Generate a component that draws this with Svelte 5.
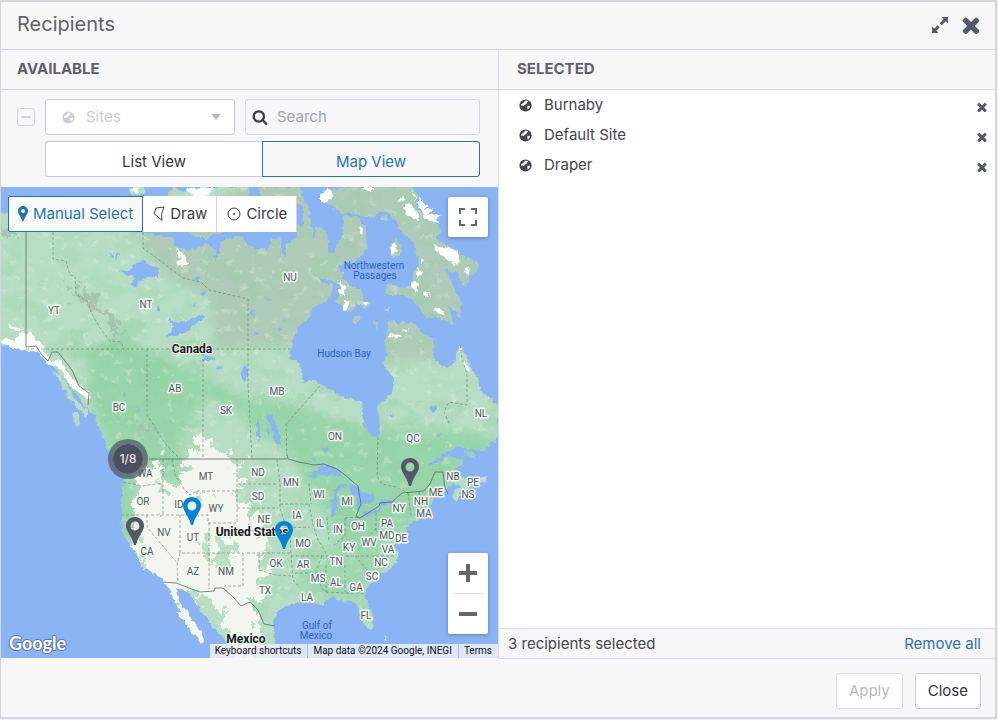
<script>
	let view = $state('map')
	let mode = $state('manual')
	let query = $state('')
	let sites = $state(['Burnaby', 'Default Site', 'Draper'])

	const MAP_WIDTH = 497
	const MAP_HEIGHT = 471

	const pins = [
		{ name: 'Sacramento', x: 134, y: 359, picked: false },
		{ name: 'Draper', x: 191, y: 339, picked: true },
		{ name: 'Default Site', x: 283, y: 363, picked: true },
		{ name: 'Ottawa', x: 409, y: 300, picked: false }
	]

	const regions = [
		['YT', 54, 314], ['NT', 146, 308], ['NU', 290, 281], ['AB', 175, 392], ['SK', 226, 414],
		['MB', 277, 395], ['BC', 119, 411], ['ON', 335, 440], ['QC', 413, 442], ['NL', 481, 417],
		['WA', 145, 477], ['MT', 206, 480], ['ND', 258, 476], ['MN', 291, 486], ['OR', 143, 505],
		['ID', 179, 508], ['WY', 216, 512], ['SD', 258, 500], ['NE', 264, 523], ['WI', 319, 498],
		['MI', 347, 505], ['IA', 297, 519], ['IL', 320, 527], ['IN', 338, 533], ['OH', 358, 530],
		['NV', 164, 536], ['UT', 193, 541], ['CA', 147, 555], ['AZ', 193, 575], ['NM', 226, 575],
		['OK', 276, 567], ['MO', 303, 547], ['KY', 349, 551], ['WV', 369, 546], ['VA', 388, 553],
		['PA', 387, 527], ['MD', 387, 539], ['DE', 401, 542], ['NY', 399, 512], ['NH', 421, 505],
		['MA', 424, 517], ['ME', 436, 496], ['NB', 453, 480], ['PE', 473, 486], ['NS', 468, 498],
		['AR', 303, 568], ['TN', 336, 565], ['NC', 381, 566], ['SC', 372, 580], ['MS', 318, 582],
		['AL', 336, 586], ['GA', 356, 591], ['LA', 307, 601], ['TX', 265, 594], ['FL', 366, 619]
	]

	const land =
		'M0 213 L30 216 L62 222 L100 226 L150 234 L174 238 L174 247 L190 250 L205 244 L214 247 L215 262 L219 253 L221 241 L240 236 L250 247 L268 250 L272 240 L281 237 L282 252 L286 258 L286 245 L297 238 L296 225 L303 225 L303 207 L298 202 L291 187 L300 187 L303 198 L309 211 L310 222 L315 241 L316 228 L321 226 L327 235 L328 252 L334 255 L337 246 L344 233 L343 217 L349 216 L359 218 L365 226 L367 245 L364 254 L353 262 L341 264 L337 268 L344 273 L340 283 L329 280 L317 277 L324 283 L333 285 L330 298 L317 305 L313 308 L311 314 L303 322 L298 329 L292 340 L290 358 L300 364 L303 382 L312 380 L323 385 L334 392 L347 398 L361 402 L363 423 L372 437 L379 436 L380 425 L377 407 L390 395 L393 385 L393 378 L383 365 L388 352 L385 340 L388 328 L387 321 L394 320 L399 325 L404 322 L417 325 L422 333 L433 340 L433 358 L445 368 L453 365 L460 345 L465 354 L470 365 L479 380 L478 387 L489 398 L498 405 L498 439 L490 444 L484 451 L458 447 L446 452 L430 463 L426 469 L434 464 L450 456 L462 460 L463 464 L454 469 L459 476 L472 480 L485 476 L487 482 L475 484 L462 491 L455 500 L452 499 L455 489 L463 487 L453 483 L446 491 L434 498 L427 508 L429 514 L434 515 L423 518 L410 523 L405 535 L399 546 L397 538 L393 536 L395 546 L398 552 L397 562 L389 569 L380 574 L371 584 L365 592 L366 600 L372 613 L373 627 L368 630 L361 619 L358 605 L350 600 L342 602 L336 598 L325 599 L322 605 L312 603 L303 602 L293 603 L278 611 L273 620 L275 644 L274 658 L231 658 L227 642 L213 627 L200 610 L190 594 L182 589 L176 589 L178 600 L188 613 L198 627 L204 641 L203 645 L199 640 L188 626 L176 612 L181 611 L173 598 L167 585 L160 577 L150 570 L143 569 L137 558 L132 546 L127 542 L122 528 L121 510 L123 482 L125 470 L117 458 L106 442 L98 426 L96 415 L89 412 L81 400 L72 389 L64 378 L55 369 L48 363 L38 352 L24 349 L12 348 L0 344 Z'

	const islands = [
		'M320 198 L325 192 L333 190 L343 187 L410 187 L417 194 L415 208 L427 214 L435 222 L441 230 L435 240 L446 244 L454 248 L465 259 L469 257 L479 265 L474 274 L468 276 L467 287 L461 284 L459 274 L452 272 L444 268 L450 278 L455 290 L461 302 L460 318 L456 312 L448 304 L451 315 L453 324 L445 320 L435 316 L426 318 L420 308 L411 298 L400 295 L387 295 L385 288 L391 284 L402 288 L413 285 L413 273 L419 266 L417 252 L412 240 L401 232 L397 222 L391 215 L383 210 L375 217 L367 216 L353 213 L340 213 L333 207 Z',
		'M340 279 L346 281 L350 286 L361 290 L363 300 L370 304 L365 308 L356 303 L352 310 L347 312 L343 305 L336 303 L339 294 Z',
		'M174 187 L180 191 L190 190 L200 188 L213 187 L248 187 L250 193 L239 200 L248 212 L240 222 L228 232 L214 234 L207 240 L188 233 L170 228 L160 212 L165 199 Z',
		'M128 187 L145 187 L144 193 L131 196 Z',
		'M258 187 L296 187 L300 196 L296 205 L280 208 L264 200 Z',
		'M390 245 L396 239 L402 246 L401 255 L393 257 Z',
		'M352 319 L358 315 L361 318 L355 324 Z',
		'M104 437 L111 442 L118 453 L125 462 L118 461 L107 448 Z',
		'M72 413 L78 413 L80 424 L76 427 Z',
		'M53 372 L60 374 L69 387 L76 400 L88 411 L88 420 L80 410 L70 400 L62 385 Z',
		'M465 451 L474 454 L477 457 L469 456 Z',
		'M496 443 L490 440 L498 435 Z',
		'M383 214 L388 218 L385 221 L379 218 Z',
		'M385 309 L389 307 L388 313 Z M374 321 L378 323 L376 329 Z'
	]

	const glaciers = [
		'M404 206 L410 203 L419 216 L419 220 L411 217 L405 214 Z',
		'M434 244 L440 247 L449 247 L456 251 L460 262 L454 265 L446 258 L437 251 Z',
		'M411 189 L417 198 L414 201 L421 203 L418 196 L427 207 L423 210 L434 208 L428 214 L440 215 L434 219 L440 224 L433 223 L425 219 Z',
		'M391 244 L396 242 L397 251 L392 254 Z',
		'M340 280 L345 287 L345 296 L339 293 Z M344 300 L349 302 L349 308 L344 311 Z M363 301 L369 303 L365 306 Z',
		'M413 281 L420 285 L417 292 L411 287 Z M423 292 L430 293 L428 297 L423 295 Z M432 309 L439 307 L446 317 L440 314 Z',
		'M417 268 L422 272 L419 278 L416 275 Z M421 258 L424 262 L421 265 Z',
		'M320 194 L329 189 L333 195 L326 203 L320 200 Z M362 187 L374 187 L370 193 Z M397 201 L403 196 L405 200 L399 203 Z',
		'M359 226 L363 227 L362 235 Z M464 270 L470 268 L467 276 Z M389 334 L402 335 L398 338 L389 337 Z M402 330 L411 328 L405 331 Z',
		'M176 249 L182 252 L188 263 L182 267 L175 262 L181 260 Z M185 188 L214 187 L208 196 L196 199 Z M130 189 L140 187 L137 193 Z',
		'M0 342 L6 338 L14 341 L19 334 L30 333 L37 340 L42 344 L45 353 L52 362 L60 360 L67 372 L75 381 L84 390 L91 393 L88 400 L77 391 L71 386 L62 371 L57 365 L51 367 L45 360 L38 352 L24 350 L10 347 Z M8 324 L18 327 L23 331 L12 330 Z',
		'M463 360 L470 368 L468 372 L464 368 Z M459 345 L462 350 L460 353 Z M384 636 L387 641 L385 640 Z'
	]

	const lakes = [
		'M118 272 L129 271 L134 264 L145 260 L150 267 L159 268 L158 277 L147 278 L141 280 L135 288 L130 286 L134 277 L128 275 Z',
		'M165 335 L170 333 L172 325 L168 318 L177 323 L184 322 L191 319 L199 315 L207 316 L198 321 L190 330 L181 333 L174 337 Z',
		'M197 362 L203 359 L206 355 L214 357 L216 360 L205 361 Z M155 306 L161 310 L160 312 L156 310 Z',
		'M266 414 L272 415 L276 424 L279 434 L281 445 L275 442 L272 430 Z M257 420 L260 425 L260 441 L257 438 Z M267 424 L270 432 L268 436 Z',
		'M308 476 L315 471 L324 465 L332 467 L338 469 L344 477 L336 477 L332 474 L325 476 L318 474 L314 479 Z',
		'M333 490 L340 485 L349 483 L343 487 L338 490 L337 505 L335 515 L331 517 L330 506 L334 497 Z',
		'M349 484 L357 487 L364 493 L374 495 L375 501 L367 505 L362 502 L360 508 L357 511 L356 497 L351 491 Z',
		'M357 517 L364 513 L373 511 L381 506 L380 512 L372 514 L361 518 Z M378 504 L381 500 L394 499 L393 503 L380 506 Z',
		'M241 370 L246 365 L248 373 L245 384 L243 379 Z M194 278 L200 277 L198 281 L195 280 Z M200 293 L205 291 L204 296 Z M193 304 L197 303 L195 306 Z M216 368 L222 366 L219 370 Z',
		'M250 308 L255 310 L254 318 L250 315 Z M265 298 L271 300 L268 301 Z M277 327 L282 328 L279 331 Z M282 319 L287 320 L284 322 Z M254 331 L259 332 L256 334 Z',
		'M429 408 L432 405 L437 407 L435 413 L431 411 Z M388 415 L394 413 L391 417 Z M437 435 L441 433 L440 439 Z M323 449 L328 447 L327 453 Z M312 458 L316 459 L313 461 Z M367 430 L370 428 L369 431 Z',
		'M109 252 L114 256 L112 259 Z M117 252 L120 254 L115 261 Z M123 391 L126 394 L124 397 Z M137 406 L140 410 L138 412 Z M377 389 L380 388 L379 392 Z M159 513 L163 516 L161 517 Z'
	]

	const borders = [
		'M26 232 L26 347', 'M149 459 L287 459', 'M287 455 L288 459 L299 462 L314 465 L324 464 L337 469 L344 474 L358 486 L361 504 L356 516 L360 518 L379 506 L380 503 L392 502 L402 493 L424 491 L430 484 L435 472 L443 472 L445 488 L448 494',
		'M163 582 L176 583 L200 592 L214 591 L215 588 L223 588 L233 597 L241 606 L250 602 L258 610 L264 624 L275 626',
		'M26 347 L36 346 L42 355 L48 361 L52 352 L58 352 L72 370 L79 386 L89 393 L88 405'
	]

	const dashes = [
		'M26 349 L248 349', 'M53 232 V259 L66 261 L70 275 L75 276 L76 294 L88 302 L91 312 L100 328 L110 341 L121 342 L124 349',
		'M143 232 V248 L166 265 L183 278 L201 282 L209 290 L248 299 V385', 'M248 349 L290 349', 'M147 349 V415 L157 430 L166 445 L180 459',
		'M203 349 V459', 'M248 385 L252 459', 'M320 386 L286 424 L287 457', 'M378 437 L377 476 L382 484 L396 487 L408 493', 'M460 345 L462 358 L467 375 L467 405 L455 403 L449 402 L444 412 L450 425',
		'M163 459 V491', 'M172 459 L175 475 L185 490 L190 495 L197 491', 'M123 482 L142 486 L163 483', 'M121 515 H180', 'M147 515 V527 L177 563', 'M163 491 V515',
		'M180 515 V553 H243', 'M180 553 L177 565 L178 582', 'M197 491 H237', 'M237 459 V523 H208 V515 H180', 'M209 523 V589', 'M243 553 V586 H224', 'M197 491 V513', 'M237 508 L278 508', 'M238 484 L278 484', 'M277 459 L280 484 L280 508 L287 530',
		'M249 523 V531 H287', 'M247 553 L290 553', 'M259 555 V570 L275 575 L292 576', 'M290 530 L291 555 L293 580 L300 588', 'M280 504 L309 504', 'M283 528 L310 527', 'M309 504 L313 525 L318 540 L326 553', 'M291 556 L394 556', 'M322 556 L315 573 L324 592', 'M326 565 V592', 'M345 565 V592', 'M326 592 L345 593 L365 593', 'M309 483 L311 504', 'M327 517 L329 542', 'M345 518 V536 L334 545', 'M345 518 L360 517', 'M376 513 V532 H399', 'M376 528 L366 540 L358 550', 'M355 556 L370 573', 'M318 573 L295 573', 'M408 493 L411 515 L425 514', 'M419 492 L422 509'
	]
</script>

{#snippet globe()}
	<svg class="globe" viewBox="0 0 16 16" aria-hidden="true">
		<circle cx="8" cy="8" r="7.5" fill="currentColor" />
		<path
			d="M8 2 10.2 2 11.2 3.400 9.800 4.400 9 6 7 7.200 5.800 8.800 4.600 8 3.200 8.600 2.400 7 3.800 5.600 5.600 5.200 6.200 3.400Z M10.400 8.400 12.600 8.200 13.600 9.600 12.400 11.600 10.800 12.800 10.200 11Z"
			fill="var(--globe-land, #fff)"
		/>
	</svg>
{/snippet}

{#snippet times()}
	<svg viewBox="256 256 1280 1280" fill="currentColor" aria-hidden="true">
		<path d="M1490 1322q0 40-28 68l-136 136q-28 28-68 28t-68-28l-294-294-294 294q-28 28-68 28t-68-28l-136-136q-28-28-28-68t28-68l294-294-294-294q-28-28-28-68t28-68l136-136q28-28 68-28t68 28l294 294 294-294q28-28 68-28t68 28l136 136q28 28 28 68t-28 68l-294 294 294 294q28 28 28 68z" />
	</svg>
{/snippet}

<main class="dialog">
	<header class="title-bar">
		<h1>Recipients</h1>
		<button class="icon-button expand" aria-label="Expand">
			<svg viewBox="0 0 18 18" fill="currentColor" aria-hidden="true">
				<path d="M10.500 1H17v6.500l-2.200-2.200-4 4-2.100-2.100 4-4Z M1 10.500l2.200 2.200 3.500-3.500 2.100 2.100-3.500 3.500L7.500 17H1Z" />
			</svg>
		</button>
		<button class="icon-button close" aria-label="Close dialog">{@render times()}</button>
	</header>

	<div class="panels">
		<section class="panel">
			<h2>Available</h2>
			<div class="filters">
				<input type="checkbox" class="check-all" aria-label="Select all" indeterminate disabled />
				<div class="select-box">
					{@render globe()}
					<select aria-label="Recipient type" disabled>
						<option>Sites</option>
					</select>
					<svg class="caret" viewBox="0 0 10 6" aria-hidden="true"><path d="M0 0H10L5 6Z" fill="currentColor" /></svg>
				</div>
				<div class="search-box">
					<svg viewBox="0 0 1792 1792" fill="currentColor" aria-hidden="true">
						<path d="M1216 832q0-185-131.500-316.500t-316.500-131.500-316.500 131.500-131.500 316.500 131.500 316.500 316.500 131.500 316.500-131.500 131.500-316.500zm512 832q0 52-38 90t-90 38q-54 0-90-38l-343-342q-179 124-399 124-143 0-273.500-55.500t-225-150-150-225-55.500-273.500 55.500-273.500 150-225 225-150 273.500-55.500 273.500 55.500 225 150 150 225 55.500 273.500q0 220-124 399l343 343q37 37 37 90z" />
					</svg>
					<input type="text" placeholder="Search" aria-label="Search" bind:value={query} />
				</div>
				<div class="view-toggle">
					<button class:active={view === 'list'} onclick={() => (view = 'list')}>List View</button>
					<button class:active={view === 'map'} onclick={() => (view = 'map')}>Map View</button>
				</div>
			</div>

			<div class="map">
				<svg class="terrain" viewBox="1 187 497 471" preserveAspectRatio="none" role="img" aria-label="Map of North America">
					<defs>
						<clipPath id="land">
							<path d={land} />
							{#each islands as d}<path {d} />{/each}
						</clipPath>
						<filter id="soft" x="-20%" y="-20%" width="140%" height="140%"><feGaussianBlur stdDeviation="5" /></filter>
						<filter id="ragged" x="-20%" y="-20%" width="140%" height="140%" color-interpolation-filters="sRGB">
							<feTurbulence type="fractalNoise" baseFrequency="0.09" numOctaves="5" seed="4" />
							<feDisplacementMap in="SourceGraphic" scale="36" xChannelSelector="R" yChannelSelector="G" />
						</filter>
						<filter id="forest" x="0" y="0" width="100%" height="100%">
							<feTurbulence type="fractalNoise" baseFrequency="0.035 0.05" numOctaves="5" seed="11" />
							<feColorMatrix values="0 0 0 0 0.29  0 0 0 0 0.63  0 0 0 0 0.36  5 0 0 0 -2.4" />
						</filter>
						<filter id="dust" x="0" y="0" width="100%" height="100%">
							<feTurbulence type="fractalNoise" baseFrequency="0.12" numOctaves="4" seed="3" />
							<feColorMatrix values="0 0 0 0 0.8  0 0 0 0 0.9  0 0 0 0 0.78  0 7 0 0 -4.3" />
						</filter>
						<filter id="coast" color-interpolation-filters="sRGB">
							<feTurbulence type="fractalNoise" baseFrequency="0.2" numOctaves="2" seed="8" />
							<feDisplacementMap in="SourceGraphic" scale="6" xChannelSelector="R" yChannelSelector="G" />
						</filter>
					</defs>
					<rect x="1" y="187" width="497" height="471" fill="#8bb4f5" />
					<g filter="url(#coast)">
						<g clip-path="url(#land)">
							<rect x="0" y="186" width="500" height="474" fill="#b7dec4" />
							<g filter="url(#soft)">
								<path d="M130 225 L300 170 H510 V300 L445 360 L380 360 L300 345 L215 348 L212 300 L165 275 Z" fill="#adcbb6" />
								<path d="M84 350 L120 335 L200 375 L240 395 L290 405 L330 420 L400 430 L480 430 L498 450 L455 480 L410 520 L375 560 L350 575 L318 500 L290 455 L240 415 L205 395 L180 440 L185 490 L160 470 L135 480 L132 540 L115 540 L118 470 L95 420 Z" fill="#98d5aa" />
								<path d="M300 555 L390 535 L375 575 L370 625 L355 600 L310 600 L297 575 Z" fill="#a0d8b0" />
							</g>
							<rect x="0" y="186" width="500" height="240" filter="url(#forest)" opacity="0.2" />
							<rect x="245" y="390" width="255" height="230" filter="url(#forest)" opacity="0.25" />
							<rect x="70" y="320" width="130" height="230" filter="url(#forest)" opacity="0.3" />
							<rect x="0" y="186" width="500" height="474" filter="url(#dust)" opacity="0.3" />
							<g filter="url(#ragged)">
								<path d="M136 486 L143 465 L160 462 L162 484 L176 492 L182 478 L188 462 L196 440 L206 433 L214 448 L228 455 L240 462 L238 490 L244 506 L264 514 L266 540 L260 556 L266 572 L258 590 L252 612 L262 628 L256 660 L236 660 L216 622 L204 598 L185 588 L212 645 L190 650 L160 585 L138 558 L132 540 L136 510 Z" fill="#f3f6ee" />
								<path d="M212 534 L228 532 L232 552 L224 572 L214 562 Z M198 598 L212 598 L226 625 L234 648 L224 646 L208 620 Z M190 500 L204 494 L206 506 L192 509 Z M196 534 L201 542 L196 550 Z" fill="#b9dfc4" />
								<path d="M133 530 L142 548 L150 558 L146 562 L136 548 Z" fill="#b9dfc4" />
							</g>
							<path d="M66 286 L78 287 L92 297 L105 310 L117 321 L122 335 L112 333 L100 318 L90 304 L75 296 Z M0 226 L20 231 L16 236 L0 233 Z M143 421 L155 425 L152 437 Z" fill="#a3bfaa" opacity="0.8" filter="url(#ragged)" />
						</g>
						{#each glaciers as d}<path {d} fill="#fbfdf9" />{/each}
						{#each lakes as d}<path {d} fill="#8bb4f5" />{/each}
					</g>
					{#each dashes as d}<path {d} class="state-line" />{/each}
					{#each borders as d}<path {d} class="country-line" />{/each}
					{#each regions as [name, x, y]}<text class="region" {x} {y}>{name}</text>{/each}
					<text class="country" x="192" y="353">Canada</text>
					<text class="country" x="252" y="536">United States</text>
					<text class="country" x="246" y="643">Mexico</text>
					<text class="sea" x="374" y="269">Northwestern</text>
					<text class="sea" x="375" y="279">Passages</text>
					<text class="sea" x="344" y="357">Hudson Bay</text>
					<text class="sea" x="317" y="629">Gulf of</text>
					<text class="sea" x="316" y="639">Mexico</text>
				</svg>

				{#each pins as pin}
					<button
						class="pin"
						class:picked={pin.picked}
						aria-label={pin.name}
						style:left="{(pin.x / MAP_WIDTH) * 100}%"
						style:top="{(pin.y / MAP_HEIGHT) * 100}%"
					>
						<svg viewBox="0 0 20 30" aria-hidden="true">
							<path fill-rule="evenodd" d="M10 1C4.800 1 1 4.900 1 9.800c0 3.800 2.800 7.200 5.300 12 1.200 2.200 2.100 5 2.700 7.200h2c.6-2.200 1.500-5 2.700-7.200 2.500-4.800 5.300-8.200 5.300-12C19 4.900 15.200 1 10 1Zm0 4.500a4.500 4.500 0 1 0 0 9 4.500 4.500 0 0 0 0-9Z" fill="currentColor" />
						</svg>
					</button>
				{/each}
				<button
					class="cluster"
					style:left="{(127 / MAP_WIDTH) * 100}%"
					style:top="{(272 / MAP_HEIGHT) * 100}%">1/8</button
				>

				<div class="modes">
					<button class:active={mode === 'manual'} onclick={() => (mode = 'manual')}>
						<svg width="10" height="16" viewBox="0 0 10 16" aria-hidden="true">
							<path fill-rule="evenodd" d="M5 0C2.200 0 0 2.200 0 5c0 2.500 2 4.500 5 11 3-6.500 5-8.500 5-11 0-2.800-2.200-5-5-5Zm0 3a2 2 0 1 1 0 4 2 2 0 0 1 0-4Z" fill="currentColor" />
						</svg>
						Manual Select
					</button>
					<button class:active={mode === 'draw'} onclick={() => (mode = 'draw')}>
						<svg width="12" height="16" viewBox="0 0 12 16" aria-hidden="true">
							<path d="M3 2 11 1 8.500 8.500 9 14.500 1 7.500Z" fill="none" stroke="currentColor" stroke-linejoin="round" />
						</svg>
						Draw
					</button>
					<button class:active={mode === 'circle'} onclick={() => (mode = 'circle')}>
						<svg width="14" height="14" viewBox="0 0 14 14" aria-hidden="true">
							<circle cx="7" cy="7" r="6" fill="none" stroke="currentColor" />
							<circle cx="7" cy="7" r="1" fill="currentColor" />
						</svg>
						Circle
					</button>
				</div>
				<button class="fullscreen" aria-label="Toggle fullscreen view">
					<svg width="18" height="18" viewBox="0 0 18 18" fill="currentColor" aria-hidden="true">
						<path d="M0 0v6h2V2h4V0H0Zm16 0h-4v2h4v4h2V0h-2Zm0 16h-4v2h6v-6h-2v4ZM2 12H0v6h6v-2H2v-4Z" />
					</svg>
				</button>
				<div class="zoom">
					<button aria-label="Zoom in">
						<svg width="18" height="18" viewBox="0 0 18 18" aria-hidden="true"><path d="M7 0h4v7h7v4h-7v7H7v-7H0V7h7Z" fill="currentColor" /></svg>
					</button>
					<button aria-label="Zoom out">
						<svg width="18" height="18" viewBox="0 0 18 18" aria-hidden="true"><path d="M0 7h18v4H0Z" fill="currentColor" /></svg>
					</button>
				</div>
				<svg class="google" width="64" height="28" viewBox="0 0 64 28" role="img" aria-label="Google">
					<text x="3" y="20">Google</text>
				</svg>
				<div class="attribution">
					<button>Keyboard shortcuts</button>
					<span>Map data ©2024 Google, INEGI</span>
					<a href="#terms">Terms</a>
				</div>
			</div>
		</section>

		<section class="panel selected">
			<h2>Selected</h2>
			<ul>
				{#each sites as site (site)}
					<li>
						{@render globe()}
						<span>{site}</span>
						<button
							class="icon-button remove"
							aria-label="Remove {site}"
							onclick={() => (sites = sites.filter((s) => s !== site))}>{@render times()}</button
						>
					</li>
				{/each}
			</ul>
			<div class="summary">
				<span>{sites.length} recipients selected</span>
				<button onclick={() => (sites = [])}>Remove all</button>
			</div>
		</section>
	</div>

	<footer>
		<button disabled>Apply</button>
		<button>Close</button>
	</footer>
</main>

<style>
	:global(body) {
		background: #f2f2f8;
	}

	.dialog {
		display: flex;
		flex-direction: column;
		box-sizing: border-box;
		min-height: calc(100vh - 1px);
		margin-right: 1px;
		border: 2px solid #d5d5dc;
		border-left-width: 1px;
		background: #f7f7f7;
		color: #454550;
		font-family: Inter, 'Open Sans', sans-serif;
		font-size: 15px;
		line-height: 20px;
	}

	button,
	input,
	select {
		font: inherit;
		color: inherit;
		box-sizing: border-box;
	}

	button {
		padding: 0;
		border: 0;
		background: none;
		cursor: pointer;
	}

	svg {
		display: block;
		flex-shrink: 0;
	}

	.title-bar {
		display: flex;
		align-items: center;
		height: 47px;
		padding: 0 15px 0 16px;
		border-bottom: 1px solid #d3d6e0;
	}

	h1 {
		flex: 1;
		margin: 0 0 4px;
		color: #60606c;
		font-size: 20px;
		font-weight: 400;
		line-height: 24px;
	}

	.icon-button {
		color: #535968;
	}

	.title-bar .icon-button {
		padding-bottom: 2px;
	}

	.expand svg,
	.close svg {
		width: 18px;
		height: 18px;
	}

	.close {
		margin-left: 13px;
	}

	.panels {
		display: grid;
		grid-template-columns: repeat(2, minmax(0, 1fr));
		flex: 1;
	}

	.panel {
		display: flex;
		flex-direction: column;
		min-width: 0;
	}

	h2 {
		height: 39px;
		margin: 0;
		padding: 0 16px;
		border-bottom: 1px solid #d3d6e0;
		color: #60606c;
		font-size: 15px;
		font-weight: 700;
		line-height: 38px;
		text-transform: uppercase;
	}

	.filters {
		display: grid;
		grid-template-columns: 18px 190px minmax(0, 1fr);
		align-items: center;
		gap: 6px 10px;
		padding: 9px 18px 10px 16px;
	}

	.check-all {
		display: grid;
		place-items: center;
		appearance: none;
		width: 18px;
		height: 18px;
		margin: 0;
		border: 1px solid #d3d3df;
		border-radius: 3px;
	}

	.check-all::before {
		content: '';
		width: 10px;
		height: 2px;
		background: #d3d3df;
	}

	.select-box,
	.search-box {
		display: flex;
		align-items: center;
		position: relative;
		box-sizing: border-box;
		height: 36px;
		border: 1px solid #c9c9dc;
		border-radius: 3px;
		color: #c9cbdb;
	}

	.select-box {
		background: #fff;
	}

	.select-box .globe {
		position: absolute;
		left: 16px;
		pointer-events: none;
	}

	select {
		appearance: none;
		width: 100%;
		height: 34px;
		padding: 0 30px 0 40px;
		border: 0;
		background: none;
		opacity: 1;
	}

	.caret {
		position: absolute;
		right: 13px;
		width: 10px;
		height: 6px;
		color: #b4b9ce;
		pointer-events: none;
	}

	.search-box {
		border-color: #d0d8e4;
	}

	.search-box svg {
		width: 16px;
		height: 16px;
		margin: 0 9px 0 6px;
		color: #3c3c46;
	}

	.search-box input {
		flex: 1;
		min-width: 0;
		height: 34px;
		padding: 0 0 2px;
		border: 0;
		outline: 0;
		background: none;
		color: #454550;
	}

	.search-box input::placeholder {
		color: #a3a3b3;
	}

	.view-toggle {
		display: flex;
		grid-column: 2 / -1;
	}

	.view-toggle button {
		flex: 1;
		height: 36px;
		padding-top: 5px;
		border: 1px solid #c9c9dc;
		background: #fff;
		color: #33333c;
	}

	.view-toggle button:first-child {
		border-right: 0;
		border-radius: 3px 0 0 3px;
	}

	.view-toggle button:last-child {
		border-radius: 0 3px 3px 0;
	}

	.view-toggle .active {
		border: 1px solid #1f76b4;
		background: #f7f7f7;
		color: #1f76b4;
	}

	.map {
		position: relative;
		flex: 1;
		min-height: 300px;
		overflow: hidden;
		font-family: Roboto, sans-serif;
	}

	.terrain {
		position: absolute;
		width: 100%;
		height: 100%;
	}

	.state-line {
		fill: none;
		stroke: #687d70;
		stroke-dasharray: 3 2;
		opacity: 0.6;
	}

	.country-line {
		fill: none;
		stroke: #5c6b62;
		opacity: 0.8;
	}

	.terrain text {
		font-size: 10px;
		text-anchor: middle;
		paint-order: stroke;
		stroke-linejoin: round;
	}

	.region {
		fill: #505a56;
		stroke: #f2f8f3;
		stroke-width: 3px;
	}

	.terrain .country {
		fill: #16181a;
		stroke: #eef7f0;
		stroke-width: 2px;
		font-size: 12px;
		font-weight: 700;
	}

	.sea {
		fill: #2f61bd;
	}

	.pin {
		position: absolute;
		width: 20px;
		height: 30px;
		transform: translate(-50%, -100%);
		color: #525866;
	}

	.pin.picked {
		color: #0583d6;
	}

	.pin svg {
		width: 20px;
		height: 30px;
	}

	.cluster {
		position: absolute;
		width: 40px;
		height: 40px;
		border: 5px solid rgb(82 88 102 / 0.75);
		border-radius: 50%;
		background: #4b5060;
		background-clip: padding-box;
		color: #fff;
		font-family: Inter, sans-serif;
		font-size: 12px;
		transform: translate(-50%, -50%);
	}

	.modes {
		display: flex;
		position: absolute;
		top: 9px;
		left: 7px;
		font-family: Inter, 'Open Sans', sans-serif;
	}

	.modes button {
		display: flex;
		align-items: center;
		gap: 5px;
		height: 36px;
		padding: 0 9px;
		border: 1px solid #fff;
		border-right-color: #d3d3df;
		background: #fff;
		color: #3c3c46;
	}

	.modes .active {
		border-color: #1f76b4;
		border-radius: 2px 0 0 2px;
		background: #f9f9f9;
		color: #1f76b4;
	}

	.fullscreen,
	.zoom {
		position: absolute;
		right: 10px;
		width: 40px;
		border-radius: 2px;
		background: #fff;
		box-shadow: 0 1px 4px rgb(0 0 0 / 0.3);
		color: #666;
	}

	.fullscreen {
		display: grid;
		place-items: center;
		top: 10px;
		height: 40px;
	}

	.zoom {
		bottom: 24px;
	}

	.zoom button {
		display: grid;
		place-items: center;
		width: 40px;
		height: 40px;
	}

	.zoom button + button::before {
		content: '';
		position: absolute;
		top: 40px;
		width: 30px;
		height: 1px;
		background: #e2e2e6;
	}

	.zoom button + button {
		height: 41px;
	}

	.google {
		position: absolute;
		bottom: 0;
		left: 5px;
	}

	.google text {
		fill: #fff;
		stroke: #5a78ae;
		stroke-width: 2px;
		paint-order: stroke;
		font-family: Lato, sans-serif;
		font-size: 18px;
		font-weight: 700;
	}

	.attribution {
		display: flex;
		position: absolute;
		right: 0;
		bottom: 0;
		height: 14px;
		background: rgb(238 240 244 / 0.85);
		color: #101014;
		font-size: 10px;
		line-height: 14px;
	}

	.attribution > * {
		padding: 0 6px 0 5px;
		color: inherit;
		text-decoration: none;
		white-space: nowrap;
	}

	.attribution > * + * {
		border-left: 1px solid #a9c1ea;
	}

	.selected {
		border-left: 1px solid #d3dbe8;
	}

	.selected h2 {
		padding-left: 18px;
	}

	ul {
		flex: 1;
		margin: 0;
		padding: 0;
		background: #fff;
		list-style: none;
	}

	li {
		display: flex;
		align-items: center;
		gap: 12px;
		height: 30px;
		padding: 0 8px 0 20px;
	}

	li span {
		flex: 1;
	}

	.globe {
		width: 13px;
		height: 13px;
	}

	.remove {
		padding-top: 4px;
	}

	.remove svg {
		width: 10px;
		height: 10px;
	}

	.summary {
		display: flex;
		justify-content: space-between;
		align-items: center;
		height: 29px;
		padding: 0 14px 0 9px;
		border-top: 1px solid #d3dbe8;
		border-bottom: 1px solid #d3dbe8;
		margin-bottom: -1px;
	}

	.summary button {
		color: #1f76b4;
	}

	footer {
		display: flex;
		justify-content: flex-end;
		gap: 12px;
		padding: 15px 14px 8px;
	}

	footer button {
		height: 36px;
		padding: 0 12px;
		border: 1px solid #c9c9dc;
		border-radius: 3px;
		background: #fff;
		color: #33333c;
	}

	footer button:disabled {
		border-color: #d9dfec;
		color: #b4b9ce;
		cursor: default;
	}
</style>
